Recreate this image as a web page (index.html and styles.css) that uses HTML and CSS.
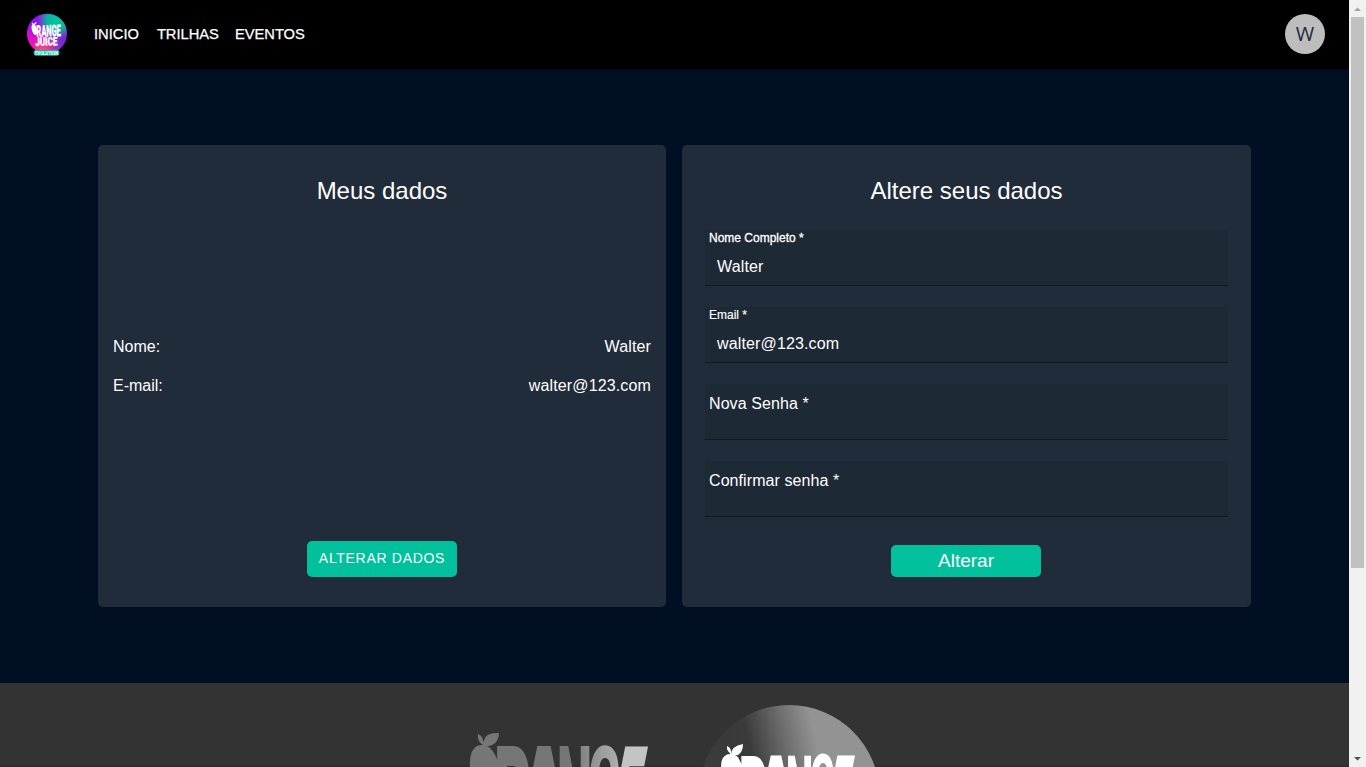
FILE: index.html
```html
<!DOCTYPE html>
<html lang="pt-BR">
<head>
<meta charset="utf-8">
<title>Orange Juice Evolution</title>
<link rel="stylesheet" href="styles.css">
</head>
<body>
<div class="page">
  <header class="navbar">
    <svg class="logo" viewBox="0 0 42 44" width="42" height="44">
      <defs>
        <linearGradient id="base" x1="0" y1=".7" x2="1" y2=".4">
          <stop offset="0" stop-color="#f00bd0"/><stop offset=".35" stop-color="#b516cf"/><stop offset=".65" stop-color="#713bd0"/><stop offset="1" stop-color="#8a13d6"/>
        </linearGradient>
        <radialGradient id="green" cx=".75" cy=".15" r=".48">
          <stop offset="0" stop-color="#00c79b"/><stop offset=".5" stop-color="#08b69e"/><stop offset="1" stop-color="#08b69e" stop-opacity="0"/>
        </radialGradient>
        <radialGradient id="pink" cx=".38" cy="1" r=".5">
          <stop offset="0" stop-color="#ff5f9c"/><stop offset=".4" stop-color="#ff2f88"/><stop offset="1" stop-color="#ff109b" stop-opacity="0"/>
        </radialGradient>
        <radialGradient id="violet" cx=".2" cy=".2" r=".4">
          <stop offset="0" stop-color="#8a12f2"/><stop offset="1" stop-color="#8a12f2" stop-opacity="0"/>
        </radialGradient>
      </defs>
      <circle cx="21" cy="20.7" r="20" fill="url(#base)"/>
      <circle cx="21" cy="20.7" r="20" fill="url(#violet)"/>
      <circle cx="21" cy="20.7" r="20" fill="url(#green)"/>
      <circle cx="21" cy="20.7" r="20" fill="url(#pink)"/>
      <g fill="#fff">
        <ellipse cx="8.300" cy="16.500" rx="2.500" ry="5.600" transform="rotate(-14 8.300 16.500)"/>
        <path d="M7.500 12Q5.500 10.500 6 9.500Q7.500 10 8 11Q9 9 10.500 9Q10.500 12 7.500 12Z"/>
        <g class="logo-word">
          <text x="10.500" y="23.800" font-size="16" textLength="24.500" lengthAdjust="spacingAndGlyphs" transform="rotate(-2 12 22)">RANGE</text>
          <text x="9.500" y="33" font-size="11.500" textLength="22" lengthAdjust="spacingAndGlyphs" transform="rotate(-2 10 32)">JUICE</text>
        </g>
      </g>
      <rect x="7.500" y="36.800" width="26" height="6" rx="3" fill="#12b99d"/>
      <text class="logo-tag" x="9" y="41.500" font-size="4.600" textLength="23" lengthAdjust="spacingAndGlyphs">EVOLUTION</text>
    </svg>
    <nav class="menu">
      <a>INICIO</a><a>TRILHAS</a><a>EVENTOS</a>
    </nav>
    <div class="avatar">W</div>
  </header>

  <main class="content">
    <section class="card profile">
      <h1 class="title">Meus dados</h1>
      <dl class="details">
        <div class="row"><dt>Nome:</dt><dd>Walter</dd></div>
        <div class="row"><dt>E-mail:</dt><dd>walter@123.com</dd></div>
      </dl>
      <button class="btn btn-edit">ALTERAR DADOS</button>
    </section>
    <section class="card">
      <h1 class="title">Altere seus dados</h1>
      <form class="form">
        <div class="field"><label class="small medium">Nome Completo *</label><span class="value">Walter</span></div>
        <div class="field"><label class="small">Email *</label><span class="value">walter@123.com</span></div>
        <div class="field"><label class="empty">Nova Senha *</label></div>
        <div class="field"><label class="empty">Confirmar senha *</label></div>
      </form>
      <button class="btn btn-save" type="button">Alterar</button>
    </section>
  </main>

  <footer class="footer">
    <svg class="brands" viewBox="0 0 1349 84" width="1349" height="84">
      <defs>
        <linearGradient id="silver" gradientUnits="userSpaceOnUse" x1="570" y1="0" x2="640" y2="0">
          <stop offset="0" stop-color="#767676"/><stop offset=".5" stop-color="#a0a0a0"/><stop offset="1" stop-color="#c4c4c4"/>
        </linearGradient>
        <linearGradient id="disc" gradientUnits="userSpaceOnUse" x1="710" y1="70" x2="814" y2="48">
          <stop offset="0" stop-color="#3c3c3c"/><stop offset=".2" stop-color="#393939"/><stop offset=".38" stop-color="#3b3b3b"/><stop offset=".7" stop-color="#6b6b6b"/><stop offset="1" stop-color="#939393"/>
        </linearGradient>
      </defs>
      <g fill="#767676">
        <path d="M470 84Q469 67 477 63Q483 60.500 489 64Q496 70 499.500 84Z"/>
        <path d="M483.500 63Q483 53 490 51Q494 49.500 499 50Q499 57 494 61Q489 64 484 63Q476.500 58 478 51Q484 53 483.500 63Z"/>
      </g>
      <g class="brand-word" fill="#767676">
        <text x="494" y="170" font-size="150" textLength="38" lengthAdjust="spacingAndGlyphs">R</text>
        <text x="516" y="170" font-size="150" textLength="56" lengthAdjust="spacingAndGlyphs">A</text>
        <text x="557" y="170" font-size="150" textLength="35" lengthAdjust="spacingAndGlyphs" fill="url(#silver)">N</text>
        <text x="588" y="132" font-size="96" textLength="33" lengthAdjust="spacingAndGlyphs" fill="url(#silver)">G</text>
        <text x="0" y="0" font-size="150" textLength="26" lengthAdjust="spacingAndGlyphs" fill="#c4c4c4" transform="translate(602 170) skewX(-11)">E</text>
      </g>
      <circle cx="789" cy="112.500" r="90.500" fill="url(#disc)"/>
      <g fill="#fff">
        <path d="M721 84Q721 74 727 71.500Q733 70 738 74L743 84Z"/>
        <path d="M731 72Q731 63 743 61Q743 69 738 72L733 73Q726 68 727 63Q732 65 731 72Z"/>
      </g>
      <g class="brand-word" fill="#fff">
        <text x="739" y="152" font-size="112" textLength="29" lengthAdjust="spacingAndGlyphs">R</text>
        <text x="754" y="152" font-size="112" textLength="44" lengthAdjust="spacingAndGlyphs">A</text>
        <text x="786" y="152" font-size="112" textLength="27" lengthAdjust="spacingAndGlyphs">N</text>
        <text x="810" y="123" font-size="72" textLength="25" lengthAdjust="spacingAndGlyphs">G</text>
        <text x="0" y="0" font-size="112" textLength="20" lengthAdjust="spacingAndGlyphs" transform="translate(820 152) skewX(-11)">E</text>
      </g>
    </svg>
  </footer>
</div>
<aside class="scrollbar">
  <svg width="17" height="17" viewBox="0 0 17 17"><path d="M5 11L8.500 7.500L12 11Z" fill="#a3a3a3"/></svg>
  <div class="thumb"></div>
  <svg class="down" width="17" height="17" viewBox="0 0 17 17"><path d="M5 7L8.500 10.500L12 7Z" fill="#505050"/></svg>
</aside>
</body>
</html>
```
FILE: styles.css
```css
* { box-sizing: border-box; }
body {
  margin: 0;
  height: 767px;
  display: flex;
  overflow: hidden;
  background: #000f24;
  color: #fff;
  font-family: "Liberation Sans", Arial, sans-serif;
}
.page { width: 1349px; height: 767px; display: flex; flex-direction: column; overflow: hidden; }
.navbar {
  height: 69px;
  flex: none;
  background: #000;
  display: flex;
  align-items: center;
  padding: 0 24px 1px 26px;
  box-shadow: 0 2px 5px rgba(0, 0, 0, .3);
}
.logo { display: block; margin-top: 1px; }
.logo-word { font-family: Roboto, sans-serif; font-weight: 900; stroke: #fff; stroke-width: .4; }
.logo-tag { font-family: Roboto, sans-serif; font-weight: 900; fill: #fff; }
.menu { display: flex; gap: 16px; margin-left: 26px; font-size: 14.7px; line-height: 17px; -webkit-text-stroke: .25px #fff; }
.menu a:first-child { margin-right: 2px; }
.avatar {
  width: 40px;
  height: 40px;
  margin-left: auto;
  border-radius: 50%;
  background: #bdbdbd;
  color: #1f2b3b;
  font: 20px/40px "Open Sans", sans-serif;
  text-align: center;
}
.content {
  flex: none;
  height: 614px;
  padding: 76px 98px;
  display: grid;
  grid-template-columns: 568px 569px;
  gap: 16px;
}
.card {
  background: #212c3b;
  border-radius: 5px;
  padding: 32px 23px 30px;
  display: flex;
  flex-direction: column;
  align-items: center;
}
.profile { padding-left: 15px; padding-right: 15px; }
.title { margin: 0; font-size: 24px; line-height: 28px; font-weight: 400; }
.details { width: 100%; margin: auto 0; display: grid; gap: 21px; font-size: 16px; line-height: 18px; }
.profile .details { padding-bottom: 13px; }
.row { display: flex; justify-content: space-between; }
.row dd { margin: 0; letter-spacing: .14px; }
.btn {
  width: 150px;
  padding: 0;
  border: 0;
  border-radius: 5px;
  background: #00c19c;
  color: #fff;
  font-family: inherit;
}
.btn-edit { height: 36px; font-size: 14px; letter-spacing: .7px; padding-bottom: 2px; }
.btn-save { height: 32px; margin-top: auto; margin-right: 1px; font-size: 19px; }
.form { width: 100%; display: grid; gap: 21px; margin-top: 25px; }
.field {
  height: 56px;
  padding: 0 4px;
  background: #1e2936;
  border-bottom: 1px solid #101820;
  border-radius: 4px 4px 0 0;
  display: flex;
  flex-direction: column;
}
.small { font-size: 12px; line-height: 16px; -webkit-text-stroke: .15px #fff; }
.medium { -webkit-text-stroke: .3px #fff; }
.value { padding: 12px 8px 0; font-size: 16px; line-height: 18px; letter-spacing: .14px; }
.empty { padding-top: 10px; font-size: 16px; line-height: 20px; letter-spacing: .08px; }
.footer {
  flex: none;
  height: 84px;
  background: linear-gradient(#333 97%, #2b2b2b);
}
.brands { display: block; }
.brand-word { font-family: Roboto, sans-serif; font-weight: 900; }
.scrollbar { width: 17px; height: 767px; background: #f1f1f1; display: flex; flex-direction: column; align-items: center; }
.scrollbar svg { display: block; }
.thumb { width: 13px; height: 551px; background: #c1c1c1; }
.down { margin-top: auto; }
```
